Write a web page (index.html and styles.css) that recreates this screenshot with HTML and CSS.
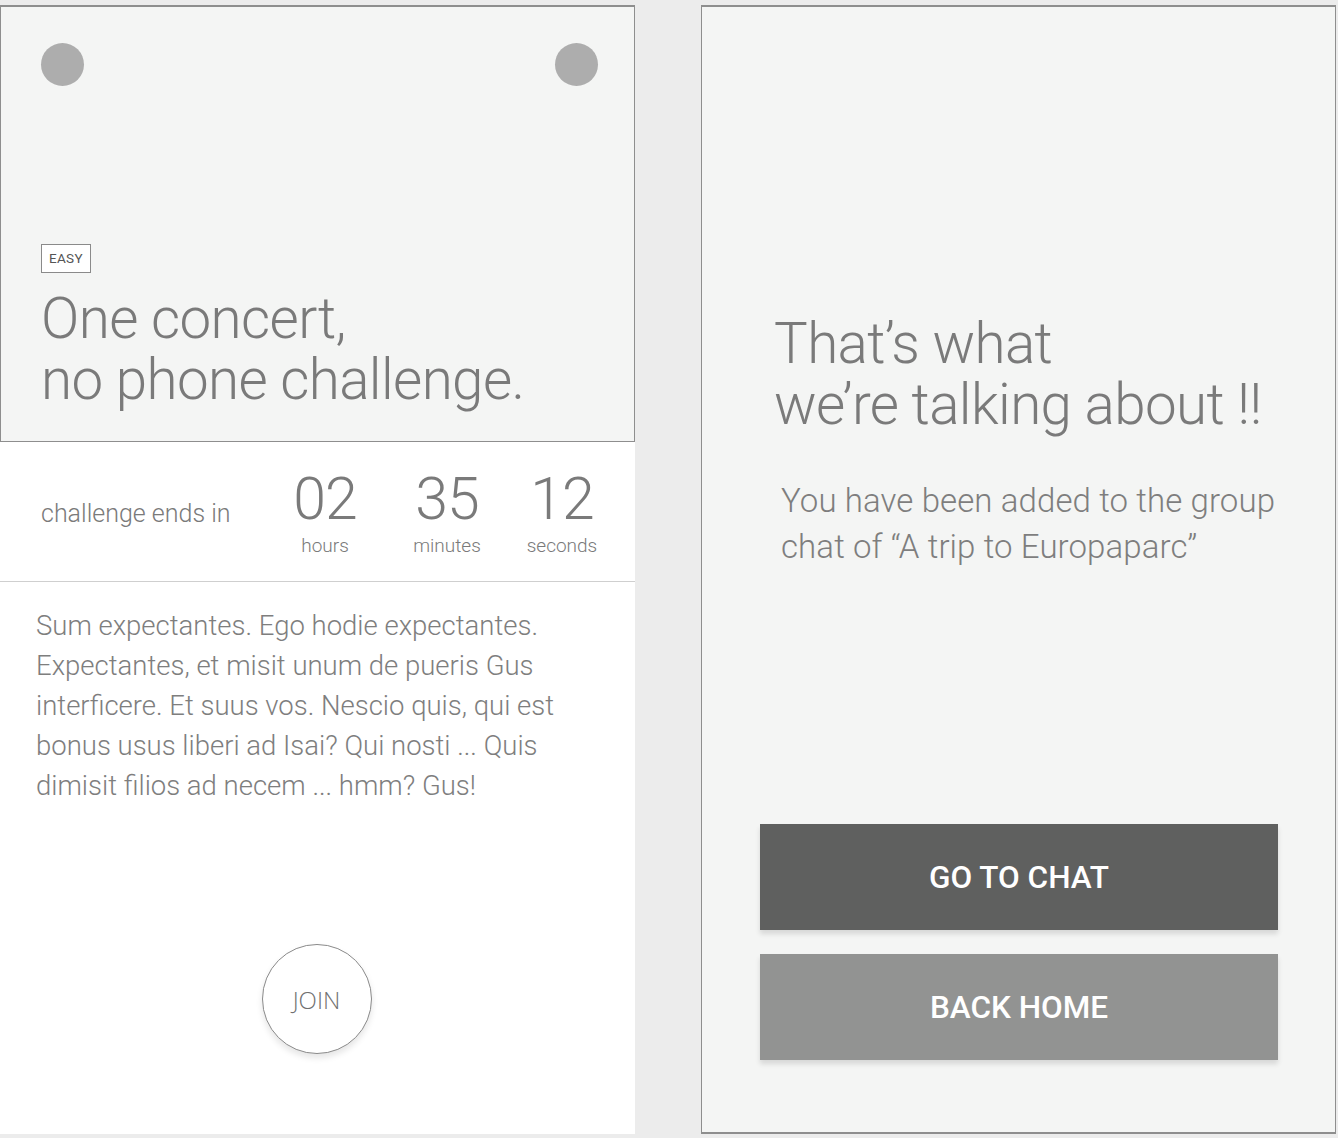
FILE: index.html
```html
<!DOCTYPE html>
<html>
<head>
<meta charset="utf-8">
<link rel="stylesheet" href="styles.css">
</head>
<body>
<div class="screens">
  <section class="panel challenge">
    <div class="hero">
      <div class="dots">
        <span class="dot"></span>
        <span class="dot"></span>
      </div>
      <span class="tag">EASY</span>
      <h1 class="title">One concert,<br>no phone challenge.</h1>
    </div>
    <div class="countdown">
      <div class="ends">challenge ends in</div>
      <div class="unit"><span class="num">02</span><span class="lbl">hours</span></div>
      <div class="unit"><span class="num">35</span><span class="lbl">minutes</span></div>
      <div class="unit"><span class="num">12</span><span class="lbl">seconds</span></div>
    </div>
    <p class="desc">Sum expectantes. Ego hodie expectantes.<br>Expectantes, et misit unum de pueris Gus<br>interficere. Et suus vos. Nescio quis, qui est<br>bonus usus liberi ad Isai? Qui nosti ... Quis<br>dimisit filios ad necem ... hmm? Gus!</p>
    <div class="join-wrap">
      <button class="join">JOIN</button>
    </div>
  </section>
  <section class="panel success">
    <h2 class="title2">That’s what<br>we’re talking about !!</h2>
    <p class="sub">You have been added to the group<br>chat of “A trip to Europaparc”</p>
    <div class="actions">
      <button class="btn dark">GO TO CHAT</button>
      <button class="btn mid">BACK HOME</button>
    </div>
  </section>
</div>
</body>
</html>
```
FILE: styles.css
```css
* { box-sizing: border-box; }
html, body { margin: 0; padding: 0; }
body {
  background: #ececec;
  font-family: Roboto, "Open Sans", sans-serif;
  color: #7a7a7a;
  width: 1338px;
  height: 1138px;
  overflow: hidden;
}
.screens {
  display: flex;
  gap: 66px;
  padding-top: 5px;
}
.panel {
  width: 635px;
  height: 1129px;
  display: flex;
  flex-direction: column;
}
.challenge { background: #fff; }
.hero {
  height: 437px;
  background: #f4f5f4;
  border: 1px solid #8e8e8e;
  border-top-width: 2px;
  padding: 36px 36px 0 40px;
  display: flex;
  flex-direction: column;
  align-items: flex-start;
}
.dots {
  width: 100%;
  display: flex;
  justify-content: space-between;
}
.dot {
  width: 43px;
  height: 43px;
  border-radius: 50%;
  background: #adadad;
}
.tag {
  margin-top: 158px;
  border: 1px solid #8a8a8a;
  background: #fff;
  font-size: 13.5px;
  line-height: 27px;
  padding: 0 7px;
  color: #555;
  letter-spacing: 0.3px;
}
.title {
  margin: 16px 0 0;
  font-weight: 300;
  font-size: 56.5px;
  line-height: 61px;
  color: #7a7a7a;
  letter-spacing: -0.6px;
}
.countdown {
  height: 140px;
  border-bottom: 1px solid #cfcfcf;
  display: grid;
  grid-template-columns: 229px 110px 134px 96px;
  align-items: center;
  padding-left: 41px;
}
.ends {
  font-size: 25px;
  font-weight: 300;
  padding-top: 4px;
}
.unit {
  display: flex;
  flex-direction: column;
  align-items: center;
  padding-top: 4px;
}
.num {
  font-size: 59px;
  font-weight: 300;
  line-height: 58px;
  letter-spacing: -1px;
}
.lbl {
  font-size: 19px;
  font-weight: 300;
  line-height: 24px;
  margin-top: 6px;
}
.desc {
  margin: 24px 0 0 36px;
  font-size: 27.5px;
  font-weight: 300;
  line-height: 40px;
  color: #7e7e7e;
}
.join-wrap {
  display: flex;
  justify-content: center;
  margin-top: 138px;
  padding-right: 2px;
}
.join {
  width: 110px;
  height: 110px;
  border-radius: 50%;
  border: 1px solid #8a8a8a;
  background: #fff;
  box-shadow: 0 4px 6px rgba(0,0,0,0.10);
  font-family: "Open Sans", Roboto, sans-serif;
  font-weight: 300;
  font-size: 24px;
  color: #707070;
  padding: 0;
}
.success {
  background: #f4f5f4;
  border: 1px solid #8e8e8e;
  border-top-width: 2px;
  border-bottom-width: 2px;
  padding: 0 0 72px;
}
.title2 {
  margin: 307px 0 0 72px;
  font-weight: 300;
  font-size: 56.5px;
  line-height: 61px;
  letter-spacing: -0.6px;
  color: #7a7a7a;
}
.sub {
  margin: 42px 0 0 79px;
  font-size: 33px;
  font-weight: 300;
  line-height: 46px;
  letter-spacing: 0.1px;
  color: #7e7e7e;
}
.actions {
  margin-top: auto;
  margin-left: 58px;
  width: 518px;
  display: flex;
  flex-direction: column;
  gap: 24px;
}
.btn {
  height: 106px;
  border: none;
  color: #fff;
  font-family: Roboto, sans-serif;
  font-weight: 500;
  font-size: 31.5px;
  box-shadow: 0 4px 5px rgba(0,0,0,0.12);
  padding: 0;
}
.dark { background: #5f605f; }
.mid { background: #929392; }
```
